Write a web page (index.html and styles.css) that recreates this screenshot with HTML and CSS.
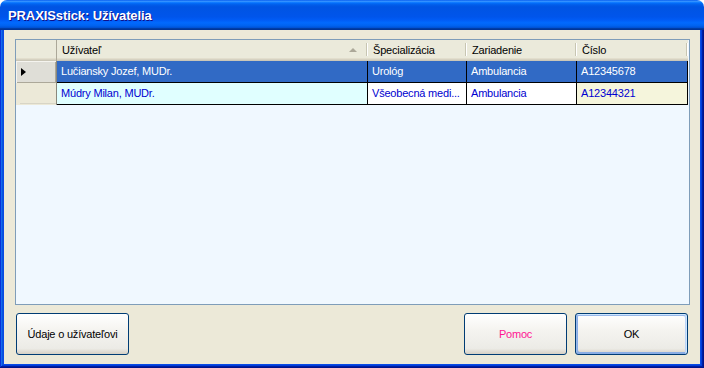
FILE: index.html
```html
<!DOCTYPE html>
<html lang="sk">
<head>
  <meta charset="UTF-8">
  <title>PRAXISstick: Užívatelia</title>
  <meta name="viewport" content="width=device-width, initial-scale=1.0">
  <link rel="stylesheet" href="styles.css">
</head>
<body>
  <div class="window">
    <div class="titlebar"><span class="title">PRAXISstick: Užívatelia</span></div>
    <div class="frame">
      <div class="content">
        <div class="grid">
          <div class="grid-head">
            <div class="hcell corner"></div>
            <div class="hcell"><span>Užívateľ</span><i class="sort-arrow"></i></div>
            <div class="hcell">Špecializácia</div>
            <div class="hcell">Zariadenie</div>
            <div class="hcell">Číslo</div>
          </div>
          <div class="grid-row selected">
            <div class="rowhead current"><i class="row-arrow"></i></div>
            <div class="cell">Lučiansky Jozef, MUDr.</div>
            <div class="cell">Urológ</div>
            <div class="cell">Ambulancia</div>
            <div class="cell">A12345678</div>
          </div>
          <div class="grid-row">
            <div class="rowhead"></div>
            <div class="cell cell-name">Múdry Milan, MUDr.</div>
            <div class="cell">Všeobecná medi...</div>
            <div class="cell">Ambulancia</div>
            <div class="cell cell-num">A12344321</div>
          </div>
        </div>
        <div class="buttons">
          <button class="btn btn-info">Údaje o užívateľovi</button>
          <span class="spacer"></span>
          <button class="btn btn-help">Pomoc</button>
          <button class="btn btn-ok">OK</button>
        </div>
      </div>
    </div>
  </div>
</body>
</html>
```

FILE: styles.css
```css
/* XP style dialog, Luna blue */
* {
  margin: 0; padding: 0; box-sizing: border-box;
}
body {
  background: #fff;
  font-family: "Liberation Sans", Arial, sans-serif;
  font-size: 11px;
  letter-spacing: -0.2px;
  overflow: hidden;
}
.window {
  width: 704px; height: 368px;
  display: flex; flex-direction: column;
}
.titlebar {
  height: 30px; flex: none;
  display: flex; align-items: center; padding-left: 8px;
  border-radius: 7px 7px 0 0;
  background: linear-gradient(to bottom, #0058ee 0%, #3a93ff 4%, #288eff 6%, #127dff 8%, #036ffc 10%, #0262ee 14%, #0057e5 20%, #0054e3 24%, #0055eb 56%, #005bf5 66%, #026afe 76%, #0062ef 86%, #0052d6 92%, #0040ab 94%, #003092 100%);
}
.title {
  color: #fff; font-weight: bold; font-size: 13px;
  text-shadow: 1px 1px #0f1089;
  letter-spacing: -0.1px;
}
.frame {
  flex: 1; display: flex;
  padding: 0 4px 4px;
  background: #0a4be4;
  box-shadow: inset -1px -1px #00138c, inset 1px 0 #0831d9, inset -2px -2px #001ea0, inset 2px 0 #166aee, inset -3px -3px #003bda, inset 3px 0 #0855dd;
}
.content {
  flex: 1; display: flex; flex-direction: column; gap: 8px;
  background: #ece9d8;
  padding: 9px 10px 9px 11px;
}

/* data grid */
.grid {
  flex: 1;
  border: 1px solid #7f9db9;
  background: #f0f8ff;
}
.grid-head, .grid-row {
  display: grid;
  grid-template-columns: 41px 311px 99px 110px 111px;
}
.grid-head { height: 21px; }
.hcell {
  position: relative;
  display: flex; align-items: center;
  padding: 0 5px 2px;
  background: #ebeadb;
  box-shadow: inset 0 -1px #cbc7b8, inset 0 -2px #d6d2c2, inset 0 -3px #e2decd;
  white-space: nowrap;
}
.hcell::after {
  content: ""; position: absolute;
  right: 1px; top: 3px; bottom: 5px; width: 1px;
  background: #c7c5b2; box-shadow: 1px 0 #fff;
}
.hcell.corner::after {
  right: 0; top: 0; bottom: 0; background: #aca899; box-shadow: none;
}
.sort-arrow {
  margin-left: auto; margin-right: 6px;
  border-left: 4px solid transparent; border-right: 4px solid transparent;
  border-bottom: 4px solid #aca899;
}
.grid-row { height: 22px; }
.rowhead {
  display: flex; align-items: center; padding-left: 5px;
  background: #ece9d8;
  border-right: 1px solid #8a887c;
  box-shadow: inset 4px -1px #ece9d8, inset 0 -2px #d8d5c6;
}
.rowhead.current {
  background: #dfded7;
  box-shadow: inset 1px 1px #f5f4ef, inset -1px -1px #aca899;
}
.row-arrow {
  border-left: 5px solid #000;
  border-top: 4px solid transparent; border-bottom: 4px solid transparent;
}
.cell {
  display: flex; align-items: center;
  padding: 0 4px 1px;
  color: #0000d0; background: #fff;
  border-right: 1px solid #000; border-bottom: 1px solid #000;
  white-space: nowrap; overflow: hidden;
}
.cell-name { background: #e0ffff; }
.cell-num { background: #f5f5dc; }
.selected .cell {
  background: #316ac5; color: #fff;
}

/* buttons */
.buttons {
  height: 42px; flex: none;
  display: flex; gap: 8px;
}
.spacer { flex: 1; }
.btn {
  height: 42px;
  font-family: "Liberation Sans", Arial, sans-serif; font-size: 11px;
  letter-spacing: -0.2px;
  color: #000;
  border: 1px solid #003c74; border-radius: 3px;
  background: linear-gradient(to bottom, #fff 0%, #f5f4f0 40%, #ecebe6 86%, #d6d0c5 100%);
}
.btn-info { width: 113px; margin-left: 1px; }
.btn-help { width: 103px; color: #ff1493; }
.btn-ok {
  width: 113px; margin-right: 2px;
  box-shadow: inset -1px 1px #cee7ff, inset 1px 2px #98b8ea, inset -2px 2px #bcd4f6, inset 1px -1px #89ade4, inset 2px -2px #89ade4;
}
```
